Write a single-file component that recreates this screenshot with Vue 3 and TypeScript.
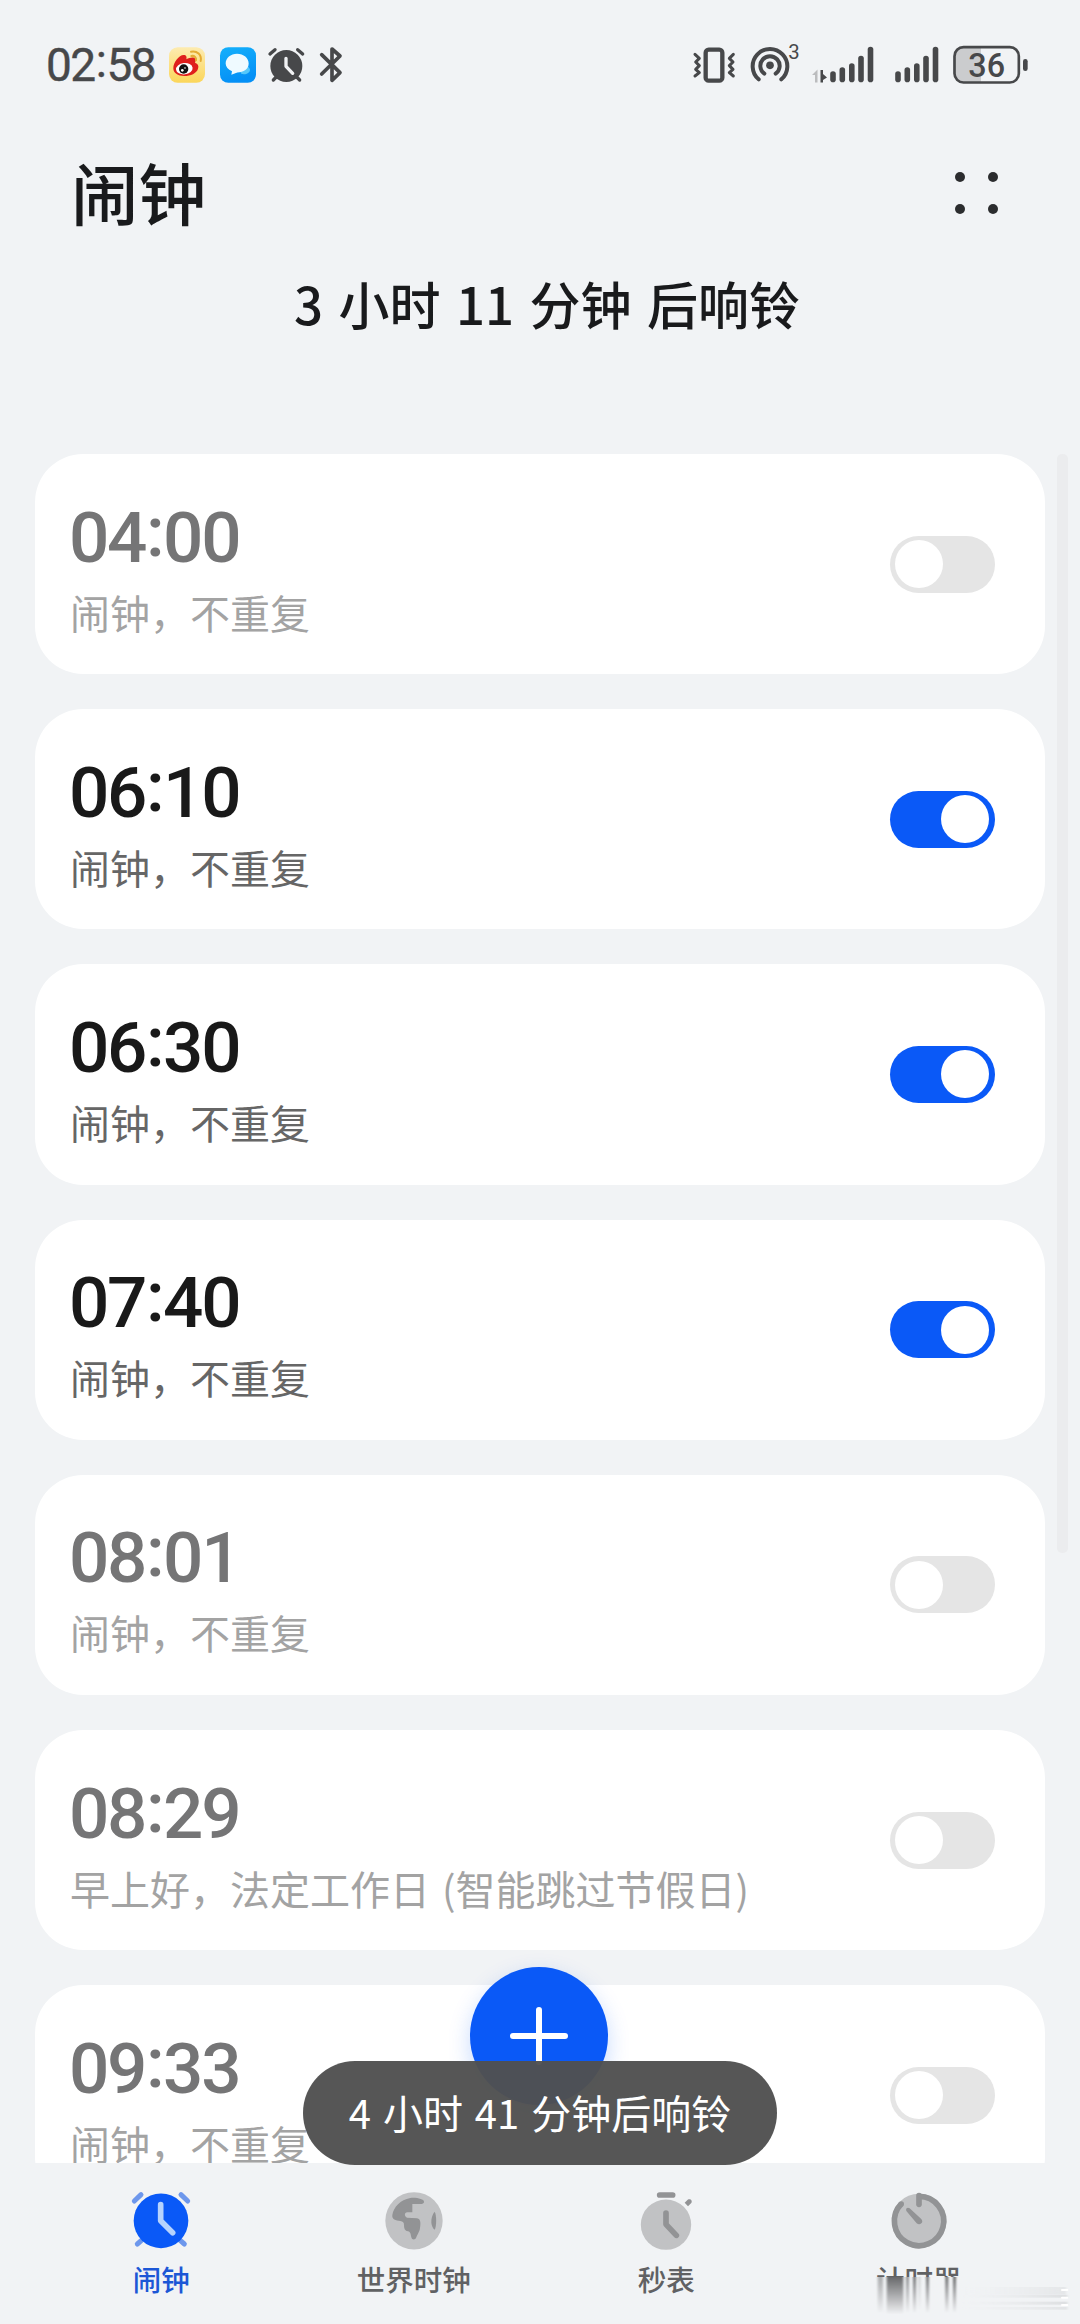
<script setup lang="ts">
import { ref } from 'vue'

interface Alarm {
  time: string
  label: string
  on: boolean
}

const alarms = ref<Alarm[]>([
  { time: '04:00', label: '闹钟，不重复', on: false },
  { time: '06:10', label: '闹钟，不重复', on: true },
  { time: '06:30', label: '闹钟，不重复', on: true },
  { time: '07:40', label: '闹钟，不重复', on: true },
  { time: '08:01', label: '闹钟，不重复', on: false },
  { time: '08:29', label: '早上好，法定工作日 (智能跳过节假日)', on: false },
  { time: '09:33', label: '闹钟，不重复', on: false },
])

const hours = (t: string): string => t.split(':')[0]
const minutes = (t: string): string => t.split(':')[1]

const signalBars = [
  { x: 3, top: 24 },
  { x: 12.3, top: 20 },
  { x: 21.8, top: 16 },
  { x: 31, top: 8.5 },
  { x: 40.5, top: -0.5 },
]
</script>

<template>
  <div class="screen">
    <div class="status">
      <div class="clock">02<i class="colon">:</i>58</div>
      <svg class="weibo" width="36" height="36" viewBox="417 53 108 106">
        <defs>
          <linearGradient id="wb" x1="0" y1="0" x2="0" y2="1">
            <stop offset="0" stop-color="#fdebb0" /><stop offset="1" stop-color="#fbd65a" />
          </linearGradient>
        </defs>
        <rect x="417" y="53" width="108" height="106" rx="26" fill="url(#wb)" />
        <path d="M430 116C430 98 447 76 461 76C469 76 471 82 469 89C480 83 493 81 496 88C498 92 496 97 495 99C504 102 507 108 504 117C500 131 482 139 463 139C443 139 430 130 430 116Z" fill="#df1f1c" />
        <ellipse cx="463" cy="117" rx="25" ry="17" fill="#fff" transform="rotate(-7 463 117)" />
        <circle cx="461" cy="118" r="14" fill="#111" />
        <circle cx="457" cy="122" r="4" fill="#fff" /><circle cx="465" cy="115" r="2.5" fill="#fff" />
        <path d="M483 66C501 62 516 76 512 94M484 79C493 77 500 84 498 92" fill="none" stroke="#e5ac35" stroke-width="6" stroke-linecap="round" />
      </svg>
      <svg class="chat" width="36" height="36" viewBox="570 51 108 107">
        <defs>
          <linearGradient id="ch" x1="0" y1="0" x2="0.3" y2="1">
            <stop offset="0" stop-color="#14b0fb" /><stop offset="1" stop-color="#0590f6" />
          </linearGradient>
        </defs>
        <rect x="570" y="51" width="108" height="107" rx="25" fill="url(#ch)" />
        <path d="M630 123L652 105L660 117C660 130 646 134 634 131Z" fill="#55c8fb" />
        <path d="M621 71C641 71 656 84 656 100C656 116 641 127 622 127L604 134L606 123C594 118 587 110 587 100C587 84 602 71 621 71Z" fill="#effaff" />
      </svg>
      <svg class="alarm-s" width="37" height="36" viewBox="713 51 111 108">
        <circle cx="768" cy="108" r="48" fill="#47484a" />
        <path d="M719 72L734 59M817 72L802 59M729 150L738 141M808 150L799 141" stroke="#47484a" stroke-width="10" stroke-linecap="round" />
        <path d="M767 85V109L787 130" fill="none" stroke="#f1f2f4" stroke-width="10" stroke-linecap="round" stroke-linejoin="round" />
      </svg>
      <svg class="bt" width="24" height="36" viewBox="866 51 72 108">
        <path d="M874 74L929 128L905 151V57L929 78L874 132" fill="none" stroke="#47484a" stroke-width="11" stroke-linecap="round" stroke-linejoin="round" />
      </svg>

      <div class="spacer"></div>

      <svg width="44" height="38" viewBox="69 47 132 114">
        <rect x="110" y="58" width="50" height="93" rx="9" fill="none" stroke="#47484a" stroke-width="13" />
        <path d="M78 72L91 84L80 95L91 106L80 117L91 127L78 137M193 72L181 84L192 95L181 106L192 117L181 127L193 137" fill="none" stroke="#47484a" stroke-width="9" stroke-linecap="round" stroke-linejoin="round" />
      </svg>
      <svg class="hotspot" width="50" height="40" viewBox="242 40 150 120">
        <circle cx="302" cy="107" r="11.500" fill="#47484a" />
        <path d="M285 132A29 29 0 1 1 319 132M268 149A52 52 0 1 1 336 149" fill="none" stroke="#47484a" stroke-width="12" stroke-linecap="round" />
        <text x="357" y="89" font-size="61" fill="#47484a">3</text>
      </svg>
      <svg class="sig1" width="66" height="38" viewBox="-19 -2 66 38">
        <path d="M-18 27L-12.500 21.500V34.500H-15V27Z" fill="#bbbcbe" />
        <path d="M-9.500 22H-7V26L-3 29.500L-7 32V34.500H-9.500Z" fill="#47484a" />
        <line v-for="b in signalBars" :key="b.x" :x1="b.x" :x2="b.x" :y1="b.top + 2" y2="31.4" stroke="#47484a" stroke-width="5.6" stroke-linecap="round" />
      </svg>
      <svg class="sig2" width="46" height="38" viewBox="-1 -2 46 38">
        <line v-for="b in signalBars" :key="b.x" :x1="b.x" :x2="b.x" :y1="b.top + 2" y2="31.4" stroke="#47484a" stroke-width="5.6" stroke-linecap="round" />
      </svg>
      <svg class="battery" width="76" height="40" viewBox="851 42 228 120">
        <path d="M882 48H935V155H882C864 155 856 146 856 130V74C856 56 864 48 882 48Z" fill="#cbccce" />
        <rect x="855.500" y="48.500" width="193" height="106" rx="27" fill="none" stroke="#47484a" stroke-width="8" />
        <rect x="1061" y="84" width="14" height="36" rx="7" fill="#47484a" />
        <text x="952" y="137" font-size="97" font-weight="500" text-anchor="middle" fill="#47484a">36</text>
      </svg>
    </div>

    <header class="head">
      <h1>闹钟</h1>
      <div class="dots"><b></b><b></b><b></b><b></b></div>
    </header>
    <p class="next">3 小时 11 分钟 后响铃</p>

    <main class="list">
      <section v-for="a in alarms" :key="a.time" class="card" :class="{ on: a.on }">
        <div class="info">
          <div class="time">{{ hours(a.time) }}<i class="colon">:</i>{{ minutes(a.time) }}</div>
          <div class="label">{{ a.label }}</div>
        </div>
        <button class="switch" @click="a.on = !a.on"><span></span></button>
      </section>
      <div class="scrollbar"></div>
    </main>

    <nav class="nav">
      <div class="tab active">
        <svg viewBox="93 62 180 180">
          <path d="M103 92L123 73M263 92L243 73M112 221L127 208M253 221L238 208" stroke="#6d97ec" stroke-width="15" stroke-linecap="round" />
          <circle cx="183" cy="151.500" r="82" fill="#0a59f7" />
          <path d="M182 103V151L218 187" fill="none" stroke="#b6d3fd" stroke-width="17" stroke-linecap="round" stroke-linejoin="round" />
        </svg>
        <span>闹钟</span>
      </div>
      <div class="tab">
        <svg viewBox="851 62 180 180">
          <circle cx="941" cy="151.500" r="86" fill="#c1c2c4" />
          <path d="M876 134C880 110 900 88 930 83C950 81 971 87 971 94C971 101 963 102 936 101V126H921C911 127 912 139 920 142L950 144C963 146 961 163 958 179C954 190 950 194 948 201C945 210 935 210 933 201C931 192 931 185 923 183C914 181 911 176 911 164C911 156 908 154 900 152C886 150 874 147 876 134Z" fill="#929395" />
          <path d="M1003 124C997 131 992 144 993 157C994 167 998 175 1003 178C1009 168 1009 134 1003 124Z" fill="#929395" />
        </svg>
        <span>世界时钟</span>
      </div>
      <div class="tab">
        <svg viewBox="109 92 180 180">
          <circle cx="199" cy="193" r="75.500" fill="#c1c2c4" />
          <path d="M180 104H219M199 158V192L230 225" fill="none" stroke="#929395" stroke-width="17" stroke-linecap="round" stroke-linejoin="round" />
          <path d="M255 127L264 118C272 113 280 121 274 129L265 138Z" fill="#929395" />
        </svg>
        <span>秒表</span>
      </div>
      <div class="tab">
        <svg viewBox="867 92 180 180">
          <circle cx="957" cy="182" r="82" fill="#c1c2c4" />
          <path d="M957 108A74 74 0 1 1 904 130.500" fill="none" stroke="#929395" stroke-width="17" />
          <circle cx="904" cy="131" r="8" fill="#929395" />
          <path d="M957 106V132" stroke="#929395" stroke-width="17" stroke-linecap="round" />
          <path d="M919 152C916 144 923 140 929 144L963 175C968 180 968 186 964 189C960 193 955 193 950 189Z" fill="#929395" />
        </svg>
        <span>计时器</span>
      </div>
    </nav>

    <button class="fab">
      <svg width="60" height="60" viewBox="0 0 60 60">
        <path d="M30 4V56M4 30H56" stroke="#fff" stroke-width="6" stroke-linecap="round" />
      </svg>
    </button>
    <div class="toast">4 小时 41 分钟后响铃</div>

    <!-- smeared strip over the last tab's label -->
    <svg class="smear" width="200" height="42" viewBox="825 350 600 126">
      <defs>
        <linearGradient id="sm" x1="0" y1="0" x2="0" y2="1">
          <stop offset="0" stop-color="#68696b" /><stop offset="0.35" stop-color="#98999b" />
          <stop offset="0.75" stop-color="#cfd0d2" /><stop offset="1" stop-color="#f1f3f5" />
        </linearGradient>
        <linearGradient id="sh" x1="0" y1="0" x2="1" y2="0">
          <stop offset="0" stop-color="#e9ebed" stop-opacity="0" /><stop offset="1" stop-color="#d8dadc" />
        </linearGradient>
        <filter id="soft" x="-5%" y="-5%" width="110%" height="110%"><feGaussianBlur stdDeviation="2.5 1.5" /></filter>
      </defs>
      <rect x="825" y="350" width="600" height="126" fill="#f1f3f5" />
      <g filter="url(#soft)" fill="url(#sm)">
        <rect x="833" y="350" width="16" height="108" opacity=".5" />
        <rect x="860" y="350" width="50" height="112" />
        <rect x="918" y="350" width="9" height="108" opacity=".7" />
        <rect x="939" y="350" width="9" height="108" opacity=".9" />
        <rect x="955" y="350" width="6" height="100" opacity=".3" />
        <rect x="978" y="350" width="9" height="108" opacity=".9" />
        <rect x="1036" y="350" width="9" height="108" />
        <rect x="1059" y="350" width="9" height="108" />
      </g>
      <g filter="url(#soft)" fill="url(#sh)">
        <rect x="1080" y="380" width="318" height="22" opacity=".5" />
        <rect x="1080" y="403" width="322" height="9" opacity=".8" />
        <rect x="1080" y="424" width="322" height="9" opacity=".8" />
        <rect x="1080" y="440" width="322" height="8" opacity=".6" />
      </g>
      <path d="M1386 389H1402M1386 412H1402M1386 434H1402" stroke="#fff" stroke-width="6" stroke-linecap="round" />
    </svg>
  </div>
</template>

<style>
body {
  background: #f1f3f5;
}
</style>

<style scoped>
.screen {
  position: relative;
  width: 1080px;
  height: 2324px;
  overflow: hidden;
  display: flex;
  flex-direction: column;
  background: #f1f3f5;
  font-family: 'Noto Sans CJK SC', sans-serif;
  color: #191a1c;
}
svg {
  display: block;
  flex: none;
  overflow: visible;
}
svg text {
  font-family: Roboto, sans-serif;
}
button {
  border: 0;
  padding: 0;
}
.colon {
  font-style: normal;
  display: inline-block;
  text-align: center;
}
.status {
  height: 130px;
  flex: none;
  display: flex;
  align-items: center;
  box-sizing: border-box;
  padding: 0 51px 0 46px;
}
.clock {
  width: 123px;
  font: 400 46px/60px Roboto, sans-serif;
  letter-spacing: -1.6px;
  color: #47484a;
  -webkit-text-stroke: 0.4px #47484a;
}
.clock .colon {
  width: 12px;
  line-height: 40px;
  transform: translateY(-4px);
}
.chat {
  margin-left: 15px;
}
.alarm-s {
  margin-left: 12px;
}
.bt {
  margin-left: 14px;
}
.spacer {
  flex: 1;
}
.hotspot {
  margin-left: 14px;
  margin-top: -4px;
}
.sig1 {
  margin-left: 10.5px;
}
.sig2 {
  margin-left: 17.5px;
}
.battery {
  margin-left: 13px;
}
.head {
  height: 130px;
  flex: none;
  box-sizing: border-box;
  display: flex;
  justify-content: space-between;
  align-items: center;
  padding: 0 82px 4px 71px;
}
h1 {
  margin: 0 0 5px;
  font-size: 67.5px;
  font-weight: 500;
  line-height: 90px;
}
.dots {
  display: grid;
  grid-template-columns: 10px 10px;
  gap: 22px 23px;
}
.dots b {
  width: 10px;
  height: 10px;
  border-radius: 50%;
  background: #2b2c2e;
}
.next {
  height: 194px;
  flex: none;
  margin: 0;
  padding-left: 14px;
  font-size: 51px;
  font-weight: 500;
  line-height: 86px;
  word-spacing: 4px;
  text-align: center;
}
.list {
  position: relative;
  height: 1709px;
  flex: none;
  overflow: hidden;
  display: flex;
  flex-direction: column;
  gap: 35px;
  padding: 0 35px;
}
.card {
  height: 220.2px;
  flex: none;
  box-sizing: border-box;
  border-radius: 48px;
  background: #fff;
  display: flex;
  align-items: center;
  justify-content: space-between;
  padding: 0 50px 0 35px;
}
.info {
  padding-top: 11px;
}
.time {
  margin-left: -1px;
  font: 500 71px/80px Roboto, sans-serif;
  letter-spacing: -2.3px;
  color: #757576;
}
.time .colon {
  width: 18px;
  transform: translateY(-6px);
}
.label {
  margin-top: 4px;
  font-size: 40px;
  line-height: 60px;
  word-spacing: 3px;
  color: #a3a3a3;
  white-space: nowrap;
}
.on .time {
  color: #191919;
}
.on .label {
  color: #666;
}
.switch {
  width: 105px;
  height: 57px;
  box-sizing: border-box;
  border-radius: 29px;
  background: #e5e5e5;
  padding: 0 6px 0 5px;
  display: flex;
  align-items: center;
}
.switch span {
  width: 48px;
  height: 48px;
  border-radius: 50%;
  background: #fff;
}
.on .switch {
  background: #0a59f7;
  justify-content: flex-end;
}
.scrollbar {
  position: absolute;
  left: 1057px;
  top: 0;
  width: 11px;
  height: 1099px;
  border-radius: 5px;
  background: #ebecee;
}
.nav {
  flex: 1;
  display: flex;
  padding: 28px 35px 0;
}
.tab {
  flex: 1;
  display: flex;
  flex-direction: column;
  align-items: center;
  font-size: 28.5px;
  font-weight: 500;
  line-height: 40px;
  color: #606163;
}
.tab svg {
  width: 60px;
  height: 60px;
}
.tab span {
  margin-top: 8px;
}
.active {
  color: #1c57d6;
}
.fab {
  position: absolute;
  left: 470px;
  top: 1967px;
  width: 138px;
  height: 138px;
  border-radius: 50%;
  background: #0a59f7;
  box-shadow: 0 8px 22px rgba(10, 89, 247, 0.22);
  display: flex;
  align-items: center;
  justify-content: center;
}
.toast {
  position: absolute;
  left: 303px;
  top: 2061px;
  width: 474px;
  height: 104px;
  border-radius: 52px;
  background: rgba(80, 80, 80, 0.965);
  color: #fff;
  font-size: 40px;
  line-height: 102px;
  word-spacing: 3px;
  text-align: center;
  white-space: nowrap;
}
.smear {
  position: absolute;
  left: 875px;
  top: 2277px;
  overflow: hidden;
}
</style>
